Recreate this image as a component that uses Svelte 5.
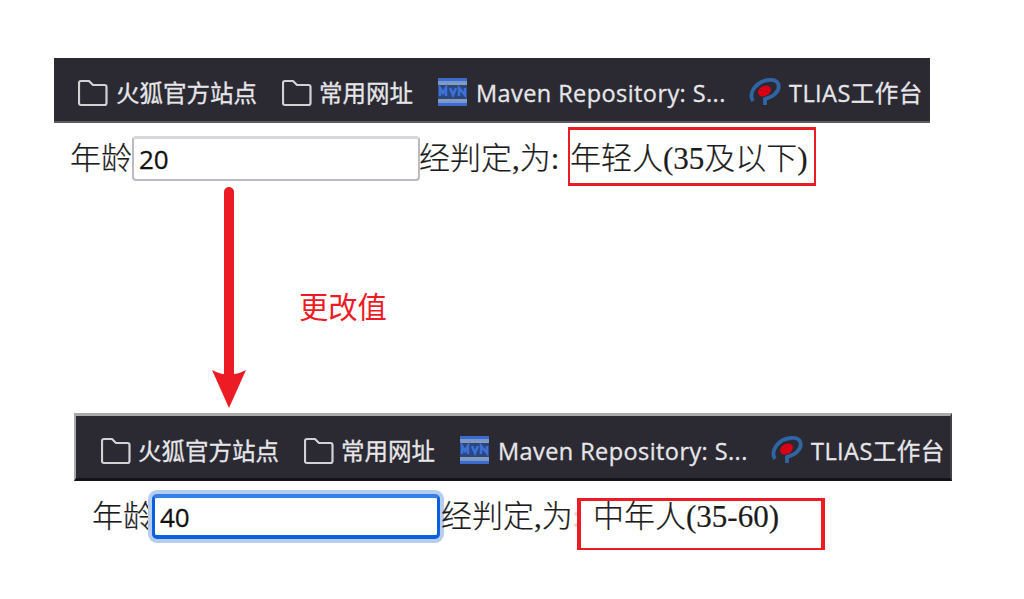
<script>
  let panels = $state([
    { id: 'first', age: '20', verdict: '年轻人(35及以下)' },
    { id: 'second', age: '40', verdict: '中年人(35-60)' }
  ]);
</script>

{#snippet folder()}
  <svg class="folder" viewBox="0 0 30 28" fill="none" stroke="#d2d2d6" stroke-width="2.200" stroke-linejoin="round">
    <path d="M3 2h8l4 4h11.500q2 0 2 2v16q0 2-2 2H3q-2 0-2-2V4q0-2 2-2z" />
  </svg>
{/snippet}

<main>
  {#each panels as p}
    <section class={p.id}>
      <nav>
        {@render folder()}
        <span class="site">火狐官方站点</span>
        {@render folder()}
        <span class="common">常用网址</span>
        <svg class="maven" viewBox="0 0 29 28">
          <path fill="#3d6bca" d="M0 0h29v5H0zM0 23h29v5H0z" />
          <path fill="#7098df" d="M0 3h29v2H0zM0 23h29v2H0z" />
          <path fill="#9299a9" d="M0 5h29v2H0zM0 21h29v2H0z" />
          <path fill="#294780" d="M0 7h29v14H0z" />
          <path fill="none" stroke="#3e70d6" stroke-width="2.600" d="M2 18V10l3 5 3-5v8M12 10l3 7 3-7M21 18V10l6 7V10" />
        </svg>
        <span class="repo">Maven Repository: S...</span>
        <svg class="tlias" viewBox="0 0 32 28">
          <path fill="none" stroke="#2f65a2" stroke-width="3.800" d="M4 23C-1 15 7 3 20 2c11-1 12 8 6 14-3 3-7 4-10 5v6" />
          <ellipse cx="15.500" cy="13" rx="6.800" ry="5" transform="rotate(-30 15.500 13)" fill="#d70015" />
        </svg>
        <span class="desk">TLIAS工作台</span>
      </nav>
      <div class="row">
        <label for={p.id}>年龄</label>
        <input id={p.id} bind:value={p.age} />
        <span class="judge">经判定,为<span class="colon">:</span></span>
        <output>{p.verdict}</output>
        <i class="frame"></i>
      </div>
    </section>
  {/each}
  <svg class="arrow" viewBox="0 0 34 222">
    <path d="M17 5V195" stroke="#ed1c24" stroke-width="10" stroke-linecap="round" />
    <path d="M0 183q17 9 34 0L17 221z" fill="#ed1c24" />
  </svg>
  <strong class="change">更改值</strong>
</main>

<style>
  :global(body) { margin: 0; background: #fff; }
  main {
    position: relative;
    box-sizing: border-box;
    width: 1024px;
    height: 599px;
    padding: 58px 0 0 54px;
    overflow: hidden;
    display: flex;
    flex-direction: column;
    background: #fff;
  }
  nav {
    box-sizing: border-box;
    width: 876px;
    height: 65px;
    padding: 7px 0 0 24px;
    display: flex;
    align-items: center;
    background: #2b2a33;
    border-bottom: 2px solid #5c5b60;
    color: #e6e6e9;
    font: 23.500px/34px "Open Sans", "Noto Sans CJK SC", sans-serif;
    -webkit-text-stroke: 0.3px;
    white-space: nowrap;
  }
  nav svg, nav span { flex: none; }
  .folder { width: 30px; height: 28px; }
  .site { padding-left: 8px; margin-right: 25px; }
  .common { padding-left: 7px; margin-right: 25px; }
  .maven { width: 29px; height: 28px; margin-top: -2px; }
  .repo { width: 273px; margin-left: 9px; box-sizing: border-box; letter-spacing: 0.42px; }
  .tlias { width: 32px; height: 28px; margin-top: -2px; margin-right: 8px; }
  .desk { letter-spacing: 0.45px; }
  .row {
    position: relative;
    display: flex;
    align-items: center;
    height: 45px;
    margin-top: 13px;
    padding-left: 16px;
    color: #1c1c1c;
    font: 300 31px/45px "Liberation Serif", "Noto Sans CJK SC", serif;
    -webkit-text-stroke: 0.2px;
    white-space: nowrap;
  }
  label { flex: none; width: 62px; }
  input {
    flex: none;
    box-sizing: border-box;
    width: 288px;
    height: 45px;
    margin: 0;
    padding: 0 5px 1px;
    border: 2px solid #bbb9c4;
    border-top: 3px solid #d8d7de;
    border-radius: 4px;
    color: #111;
    background: #fff;
    outline: none;
    font: 26px "Open Sans", sans-serif;
    -webkit-text-stroke: 0.3px;
  }
  .judge { flex: none; width: 151px; margin-left: -1px; }
  .frame { position: absolute; box-sizing: border-box; border: 2px solid #ed1c24; }
  .first .frame { left: 514px; top: -9px; width: 248px; height: 59px; border-top-width: 3px; border-bottom-width: 3px; }
  .second { margin: 232px 0 0 20px; }
  .second nav {
    width: 878px;
    height: 68px;
    padding: 8px 0 0 25px;
    border: solid #aaaaad;
    border-width: 3px 2px 3px 2px;
    border-right-color: #424149;
    border-bottom-color: #131219;
  }
  .second .site { padding-left: 7px; }
  .second .row { padding-left: 18px; line-height: 47px; }
  .second label { width: 60px; }
  .second input { padding-bottom: 0; border: 3px solid #0561df; border-top: 4px solid #3580e6; border-bottom-width: 4px; border-radius: 5px; box-shadow: 0 0 0 4px #b8cdee; }
  .second .judge { width: 152px; margin-left: 1px; }
  .second .colon { color: #ddd; margin-left: -1px; }
  .second .frame { left: 503px; top: 4px; width: 248px; height: 52px; border-width: 3px 4px 2px; }
  .arrow { position: absolute; left: 212px; top: 187px; width: 34px; height: 222px; }
  .change { position: absolute; left: 299px; top: 284px; color: #ed1c24; font: 400 29.300px/43px "Noto Sans CJK SC", sans-serif; }
</style>
